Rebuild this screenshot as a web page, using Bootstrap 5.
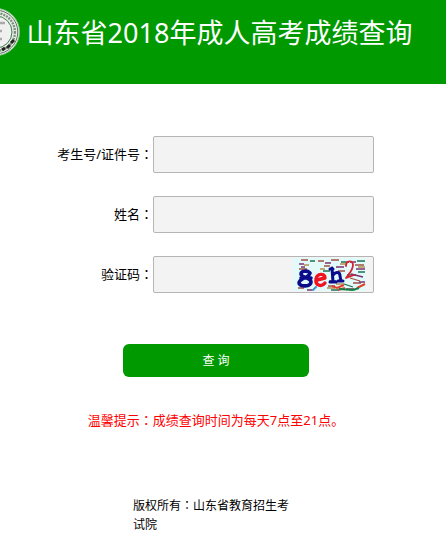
<!DOCTYPE html>
<html lang="zh-CN">
<head>
<meta charset="utf-8">
<meta name="viewport" content="width=device-width, initial-scale=1">
<title>山东省2018年成人高考成绩查询</title>
<link href="https://cdn.jsdelivr.net/npm/bootstrap@5.3.0/dist/css/bootstrap.min.css" rel="stylesheet">
<style>
body{font-family:"Noto Sans","Noto Sans CJK SC",sans-serif;font-size:13px;line-height:20px;color:#000;background:#fff}
.site-head{background:#090;height:84px;padding:8px 62px 0 0;gap:7px}
.site-head h1{font-size:27px;line-height:50px;font-weight:400;color:#fff}
.full-colon{font-family:"Noto Sans CJK TC",sans-serif}
.query-form{padding-top:52px}
.field-line{display:grid;grid-template-columns:minmax(0,1fr) 221px;padding-right:72px;margin-bottom:23px}
.field-line label{padding-bottom:2px}
.query-form .form-control{height:37px;background:#f3f3f3;border:1px solid #b5b5b5;border-radius:2px;font-size:13px}
.code-pic{right:8px;top:2px}
.centre-part{padding-right:14px}
.query-btn{width:186px;height:33px;margin-top:28px;padding:0;background:#090;border:0;border-radius:6px;font-size:12px;color:#fff}
.query-btn:hover{background:#080;color:#fff}
.hint{margin-top:33px;color:#f00}
.site-foot{margin-top:65px;font-size:12px;line-height:19px}
.site-foot p{width:166px}
</style>
<script src="https://cdn.jsdelivr.net/npm/bootstrap@5.3.0/dist/js/bootstrap.bundle.min.js"></script>
</head>
<body>
<header class="site-head d-flex justify-content-center align-items-start overflow-hidden">
  <svg class="flex-shrink-0" width="48" height="48" viewBox="0 0 48 48" aria-hidden="true">
    <circle cx="24" cy="24" r="23.5" fill="#e9efe9" stroke="#8fbf8f"/>
    <circle cx="24" cy="24" r="21.8" fill="none" stroke="#55775a" stroke-width="1"/>
    <circle cx="24" cy="24" r="18.9" fill="none" stroke="#7b917e" stroke-width="2.4" stroke-dasharray="2 1"/>
    <circle cx="24" cy="24" r="16" fill="#f0f0f0" stroke="#3d7c48"/>
    <path d="M16 15h17M16 23h14M18 31h12M24 15v18" stroke="#aaa" stroke-width="2.5" fill="none"/>
    <path d="M42 32l-3 3M38 37l-3 3M33 40l-3 2M27 42h-3" stroke="#222" stroke-width="3"/>
  </svg>
  <h1 class="m-0 text-nowrap flex-shrink-0">山东省2018年成人高考成绩查询</h1>
</header>
<main>
  <form class="query-form">
    <div class="field-line align-items-center">
      <label class="text-end" for="examno">考生号/证件号<span class="full-colon" lang="zh-TW">：</span></label>
      <input class="form-control" id="examno" type="text">
    </div>
    <div class="field-line align-items-center">
      <label class="text-end" for="fullname">姓名<span class="full-colon" lang="zh-TW">：</span></label>
      <input class="form-control" id="fullname" type="text">
    </div>
    <div class="field-line align-items-center">
      <label class="text-end" for="code">验证码<span class="full-colon" lang="zh-TW">：</span></label>
      <div class="position-relative">
        <input class="form-control" id="code" type="text">
        <svg class="code-pic position-absolute" width="73" height="33" viewBox="0 0 73 33" role="img" aria-label="验证码图片">
          <path fill="#e2fbfa" d="M0 0h73v33H0z"/>
          <g fill="none" stroke-width="1.3">
            <path stroke="#a05040" d="M8 2h7M25 3h6M38 2h8M62 7h9M6 11h8M31 8h6M45 13h7M57 20l10 3M5 30h6M35 28h7M60 25h8"/>
            <path stroke="#207050" d="M17 3h5M48 4h8M64 3h8M30 13h7M65 14h7M54 17h9M36 23h7M51 26l9 3M38 32h8"/>
            <path stroke="#803070" d="M6 6h5M32 5h6M57 4h6M8 9h4M43 9h8M63 11h9M58 16l12 3M66 24h6M14 32h5M53 31h8"/>
            <path stroke="#b09050" d="M11 7h5M27 11h5M47 6h6M65 9h7M43 26h8M34 30h8"/>
          </g>
          <path d="M39 28l5 2 7-3M45 32l7-2M64 30l8-4" fill="none" stroke="#e04030" stroke-width="2"/>
          <path d="M46 31l14 1M60 32l6-2" fill="none" stroke="#178040" stroke-width="2"/>
          <g fill="none" stroke-linecap="round" stroke-linejoin="round">
            <path d="M17 15c-3-3-9-2-9 1 0 4 10 3 10 8 0 5-12 5-12 1 0-5 10-5 11-10M8 20h10" stroke="#0b0b8c" stroke-width="3.6"/>
            <path d="M24 22l8-2c0-5-8-5-9 1-1 7 6 8 9 4" stroke="#f01420" stroke-width="3.4"/>
            <path d="M23 29l-3 3" stroke="#4090d0" stroke-width="2"/>
            <path d="M39 10l1 14M40 17c3-4 7-3 7 1l1 5M37 11h3M37 24h6M45 23h5" stroke="#0b0b8c" stroke-width="3"/>
            <path d="M53 8c0-6 7-6 7-1 0 5-4 9-7 13l8-3" stroke="#d82030" stroke-width="1.8"/>
          </g>
        </svg>
      </div>
    </div>
    <div class="centre-part text-center">
      <button class="btn query-btn" type="submit">查 询</button>
    </div>
  </form>
  <div class="centre-part">
    <p class="hint mb-0 text-center">温馨提示<span class="full-colon" lang="zh-TW">：</span>成绩查询时间为每天7点至21点。</p>
  </div>
</main>
<footer class="site-foot centre-part d-flex justify-content-center">
  <p class="mb-0 full-colon" lang="zh-TW">版权所有：山东省教育招生考试院</p>
</footer>
</body>
</html>
